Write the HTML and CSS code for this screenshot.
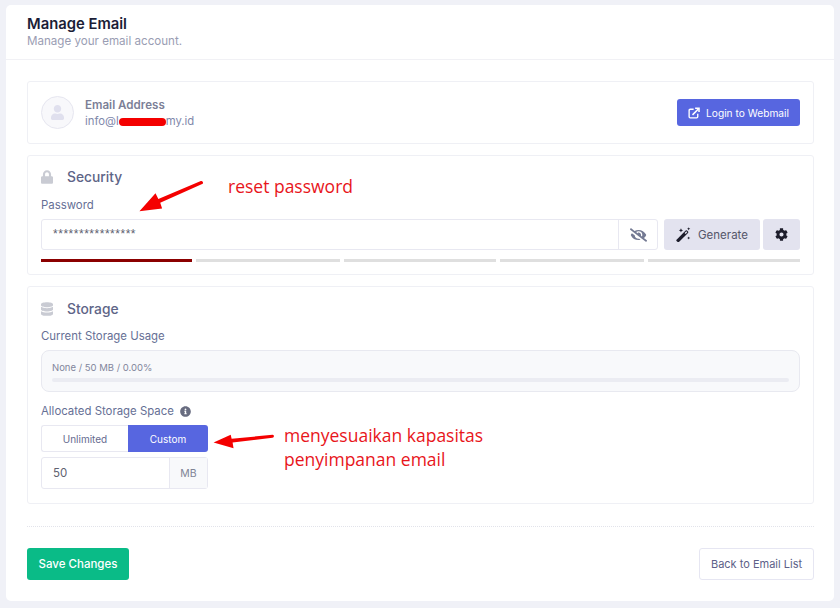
FILE: index.html
```html
<!DOCTYPE html>
<html lang="id">
<head>
    <meta charset="UTF-8">
    <meta name="viewport" content="width=device-width, initial-scale=1.0">
    <title>Manage Email</title>
    <link rel="stylesheet" href="styles.css">
</head>
<body>
    <div class="card">
        <div class="card-header">
            <h1>Manage Email</h1>
            <p>Manage your email account.</p>
        </div>

        <div class="card-body">
            <div class="panel account">
                <div class="avatar">
                    <svg viewBox="0 0 448 512" class="avatar-icon"><path d="M224 256c70.7 0 128-57.3 128-128S294.7 0 224 0 96 57.3 96 128s57.3 128 128 128zm89.6 32h-16.7c-22.2 10.2-46.9 16-72.9 16s-50.6-5.8-72.9-16h-16.7C60.2 288 0 348.2 0 422.4V464c0 26.5 21.5 48 48 48h352c26.5 0 48-21.5 48-48v-41.6c0-74.2-60.2-134.4-134.4-134.4z"/></svg>
                </div>
                <div class="account-text">
                    <div class="account-label">Email Address</div>
                    <div class="account-mail">info@l<span class="redact"></span>my.id</div>
                </div>
                <a href="#" class="btn btn-primary btn-webmail">
                    <svg viewBox="0 0 16 16" class="btn-icon"><path d="M7.5 3H3a1.5 1.5 0 0 0-1.5 1.5V13A1.5 1.5 0 0 0 3 14.500h8.500A1.500 1.500 0 0 0 13 13V9" fill="none" stroke="currentColor" stroke-width="1.800"/><path d="M6 10.500 13.500 3M9.500 1.500h5.200v5.200" fill="none" stroke="currentColor" stroke-width="2"/></svg>
                    Login to Webmail
                </a>
            </div>

            <div class="panel security">
                <h2 class="panel-title">
                    <svg viewBox="0 0 448 512" class="title-icon"><path d="M400 224h-24v-72C376 68.2 307.8 0 224 0S72 68.2 72 152v72H48c-26.5 0-48 21.5-48 48v192c0 26.5 21.5 48 48 48h352c26.500 0 48-21.500 48-48V272c0-26.500-21.500-48-48-48zm-104 0H152v-72c0-39.700 32.300-72 72-72s72 32.300 72 72v72z"/></svg>
                    Security
                </h2>
                <label class="field-label">Password</label>
                <div class="password-row">
                    <div class="input-group password-group">
                        <div class="input-value password-value">****************</div>
                        <div class="addon addon-eye">
                            <svg viewBox="0 0 640 512" class="eye-icon"><path d="M320 400c-75.850 0-137.250-58.710-142.900-133.110L72.200 185.820c-13.790 17.300-26.480 35.590-36.720 55.590a32.350 32.350 0 0 0 0 29.190C89.710 376.410 197.070 448 320 448c26.910 0 52.870-4 77.890-10.460L346 397.390a144.130 144.130 0 0 1-26 2.610zm313.820 58.100l-110.550-85.440a331.250 331.250 0 0 0 81.250-102.070 32.350 32.350 0 0 0 0-29.190C550.290 135.590 442.930 64 320 64a308.150 308.150 0 0 0-147.320 37.700L45.460 3.370A16 16 0 0 0 23 6.180L3.370 31.450A16 16 0 0 0 6.180 53.900l588.360 454.730a16 16 0 0 0 22.460-2.810l19.640-25.270a16 16 0 0 0-2.820-22.450zm-183.720-142l-39.300-30.380A94.750 94.750 0 0 0 416 256a94.760 94.760 0 0 0-121.310-92.210A47.650 47.650 0 0 1 304 192a46.640 46.640 0 0 1-1.540 10l-73.610-56.890A142.310 142.310 0 0 1 320 112a143.920 143.920 0 0 1 144 144c0 21.630-5.290 41.790-13.900 60.110z"/></svg>
                        </div>
                    </div>
                    <a href="#" class="btn btn-soft btn-generate">
                        <svg viewBox="0 0 16 16" class="wand-icon"><path d="M.6 13.500 10.300 3.800a1 1 0 0 1 1.400 0l1.100 1.100a1 1 0 0 1 0 1.400L3.100 16a1 1 0 0 1-1.400 0L.6 14.900a1 1 0 0 1 0-1.400z"/><path d="M9.200 6.300 10.900 4.600l1.100 1.100-1.700 1.700z" fill="#e3e3ef"/><path d="M5.300 1.200 6 2.800l1.600.7L6 4.200l-.7 1.600-.7-1.600L3 3.500l1.600-.7zM13.500.2l.5 1.200 1.200.5-1.200.5-.5 1.200-.5-1.200-1.200-.5 1.200-.5zM13.500 10l.5 1.200 1.200.5-1.200.5-.5 1.200-.5-1.200-1.200-.5 1.200-.5z"/></svg>
                        Generate
                    </a>
                    <a href="#" class="btn btn-soft btn-gear">
                        <svg viewBox="0 0 512 512" class="gear-icon"><path d="M487.400 315.700l-42.600-24.600c4.300-23.200 4.300-47 0-70.200l42.600-24.600c4.900-2.800 7.100-8.600 5.500-14-11.100-35.600-30-67.800-54.700-94.600-3.800-4.100-10-5.100-14.800-2.300L380.800 110c-17.900-15.400-38.500-27.300-60.800-35.100V25.800c0-5.600-3.900-10.500-9.400-11.700-36.700-8.200-74.300-7.800-109.200 0-5.500 1.200-9.400 6.100-9.400 11.700V75c-22.200 7.900-42.800 19.800-60.800 35.100L88.700 85.500c-4.900-2.800-11-1.900-14.800 2.300-24.700 26.700-43.600 58.900-54.700 94.600-1.700 5.400.6 11.200 5.500 14L67.300 221c-4.300 23.200-4.300 47 0 70.200l-42.600 24.600c-4.900 2.800-7.100 8.600-5.500 14 11.100 35.600 30 67.800 54.700 94.600 3.800 4.100 10 5.100 14.800 2.300l42.600-24.600c17.900 15.400 38.500 27.300 60.800 35.100v49.200c0 5.600 3.900 10.500 9.400 11.700 36.700 8.200 74.300 7.800 109.200 0 5.500-1.200 9.400-6.100 9.400-11.700v-49.200c22.200-7.900 42.800-19.800 60.800-35.100l42.600 24.600c4.900 2.800 11 1.900 14.800-2.300 24.700-26.700 43.600-58.900 54.700-94.600 1.500-5.500-.7-11.300-5.600-14.100zM256 336c-44.100 0-80-35.900-80-80s35.900-80 80-80 80 35.900 80 80-35.900 80-80 80z"/></svg>
                    </a>
                </div>
                <div class="strength">
                    <span class="strength-bar strength-on"></span>
                    <span class="strength-bar"></span>
                    <span class="strength-bar"></span>
                    <span class="strength-bar"></span>
                    <span class="strength-bar"></span>
                </div>
            </div>

            <div class="panel storage">
                <h2 class="panel-title">
                    <svg viewBox="0 0 448 512" class="title-icon"><path d="M448 73.143v45.714C448 159.143 347.667 192 224 192S0 159.143 0 118.857V73.143C0 32.857 100.333 0 224 0s224 32.857 224 73.143zM448 176v102.857C448 319.143 347.667 352 224 352S0 319.143 0 278.857V176c48.125 33.143 136.208 48.572 224 48.572S399.874 209.143 448 176zm0 160v102.857C448 479.143 347.667 512 224 512S0 479.143 0 438.857V336c48.125 33.143 136.208 48.572 224 48.572S399.874 369.143 448 336z"/></svg>
                    Storage
                </h2>
                <label class="field-label">Current Storage Usage</label>
                <div class="usage">
                    <div class="usage-text">None / 50 MB / 0.00%</div>
                    <div class="usage-track"></div>
                </div>
                <label class="field-label field-label-info">
                    Allocated Storage Space
                    <svg viewBox="0 0 512 512" class="info-icon"><path d="M256 8C119.043 8 8 119.083 8 256c0 136.997 111.043 248 248 248s248-111.003 248-248C504 119.083 392.957 8 256 8zm0 110c23.196 0 42 18.804 42 42s-18.804 42-42 42-42-18.804-42-42 18.804-42 42-42zm56 254c0 6.627-5.373 12-12 12h-88c-6.627 0-12-5.373-12-12v-24c0-6.627 5.373-12 12-12h12v-64h-12c-6.627 0-12-5.373-12-12v-24c0-6.627 5.373-12 12-12h64c6.627 0 12 5.373 12 12v100h12c6.627 0 12 5.373 12 12v24z"/></svg>
                </label>
                <div class="toggle">
                    <span class="toggle-item">Unlimited</span>
                    <span class="toggle-item toggle-active">Custom</span>
                </div>
                <div class="input-group size-group">
                    <div class="input-value size-value">50</div>
                    <div class="addon addon-unit">MB</div>
                </div>
            </div>

            <div class="actions">
                <a href="#" class="btn btn-success">Save Changes</a>
                <a href="#" class="btn btn-outline">Back to Email List</a>
            </div>
        </div>
    </div>

    <div class="note note-reset">reset password</div>
    <div class="note note-storage">menyesuaikan kapasitas<br>penyimpanan email</div>
    <svg class="arrow arrow-reset" viewBox="0 0 70 36"><path d="M67 3 22 23 24 29 0 32 17 13 20 19 65 0a2 2 0 0 1 2 3z"/></svg>
    <svg class="arrow arrow-storage" viewBox="0 0 64 20"><path d="M62 6 20 11 21 17 0 11 18 3 19 7 62 3a1.500 1.500 0 0 1 0 3z"/></svg>
</body>
</html>
```

FILE: styles.css
```css
* {
    box-sizing: border-box;
}

body {
    font-family: 'Inter', 'Liberation Sans', sans-serif;
    margin: 0;
    padding: 5px 6px 7px;
    height: 608px;
    overflow: hidden;
    position: relative;
    background: #f0f1f7;
    color: #5e6278;
}

a {
    text-decoration: none;
}

.card {
    background: #fff;
    border-radius: 5px;
    height: 596px;
}

.card-header {
    height: 55px;
    padding: 10px 21px 0;
    border-bottom: 1px solid #f1f1f5;
}

h1 {
    margin: 0;
    font-size: 14.800px;
    line-height: 18px;
    font-weight: 600;
    color: #1b1d36;
}

.card-header p {
    margin: 0;
    font-size: 11.600px;
    line-height: 16px;
    color: #9a9db3;
}

.card-body {
    padding: 21px 20px 0 21px;
}

.panel {
    border: 1px solid #eff0f5;
    border-radius: 3px;
    padding: 0 13px;
    margin-bottom: 11px;
}

/* Email Address */
.account {
    height: 63px;
    display: flex;
    align-items: center;
}

.avatar {
    width: 33px;
    height: 33px;
    border-radius: 50%;
    border: 1px solid #e6e6f0;
    background: #f8f8fb;
    display: flex;
    align-items: center;
    justify-content: center;
}

.avatar-icon {
    width: 13px;
    height: 15px;
    fill: #e0e0ee;
}

.account-text {
    margin-left: 11px;
    padding-top: 2px;
    flex: 1;
}

.account-label {
    font-size: 11.600px;
    line-height: 16px;
    font-weight: 600;
    color: #7c7f97;
}

.account-mail {
    font-size: 11.300px;
    line-height: 17px;
    color: #7f88ab;
}

.redact {
    display: inline-block;
    width: 47px;
    height: 8px;
    border-radius: 4px;
    background: #f40000;
    vertical-align: -1px;
}

.btn {
    display: flex;
    align-items: center;
    justify-content: center;
    border-radius: 3px;
    font-size: 11px;
}

.btn-primary {
    background: #5766e0;
    color: #fff;
}

.btn-webmail {
    width: 123px;
    height: 27px;
    gap: 6px;
    font-size: 10.200px;
    font-weight: 400;
}

.btn-icon {
    width: 12px;
    height: 12px;
}

.panel-title {
    margin: 0;
    display: flex;
    align-items: center;
    font-size: 13.800px;
    line-height: 20px;
    font-weight: 500;
    color: #5e6587;
}

.title-icon {
    width: 12px;
    height: 14px;
    margin-right: 14px;
    fill: #c9cbd3;
}

.field-label {
    display: block;
    font-size: 11.400px;
    line-height: 16px;
    color: #666f95;
}

/* Security */
.security {
    height: 120px;
    padding-top: 11px;
}

.security .field-label {
    margin-top: 10px;
}

.password-row {
    display: flex;
    margin-top: 6px;
}

.input-group {
    display: flex;
    height: 31px;
    border: 1px solid #e8e8f1;
    border-radius: 3px;
    background: #fff;
}

.password-group {
    flex: 1;
}

.input-value {
    flex: 1;
    display: flex;
    align-items: center;
}

.password-value {
    padding: 0 0 2px 11px;
    font-family: 'Liberation Sans', sans-serif;
    font-size: 12px;
    letter-spacing: 0.520px;
    color: #5c6070;
}

.addon {
    display: flex;
    align-items: center;
    justify-content: center;
    border-left: 1px solid #e8e8f1;
}

.addon-eye {
    width: 39px;
}

.eye-icon {
    width: 17px;
    height: 14px;
    fill: #747a93;
}

.btn-soft {
    height: 31px;
    background: #e3e3ef;
    color: #55566a;
    fill: #1d1d2b;
}

.btn-generate {
    width: 96px;
    margin-left: 6px;
    gap: 7px;
    font-size: 11.500px;
}

.wand-icon {
    width: 15px;
    height: 15px;
}

.btn-gear {
    width: 37px;
    margin-left: 3px;
}

.gear-icon {
    width: 13px;
    height: 13px;
}

.strength {
    display: grid;
    grid-template-columns: 151px 144px 152px 144px 1fr;
    gap: 4px;
    margin-top: 9px;
}

.strength-bar {
    height: 3px;
    background: #dfdfdf;
}

.strength-on {
    background: #8b0000;
}

/* Storage */
.storage {
    height: 218px;
    padding-top: 12px;
}

.storage .field-label {
    margin-top: 9px;
}

.usage {
    height: 42px;
    margin-top: 6px;
    padding: 10px 10px 0;
    background: #f8f9fb;
    border: 1px solid #e8e9f0;
    border-radius: 8px;
}

.usage-text {
    font-size: 9.500px;
    line-height: 14px;
    color: #82869c;
}

.usage-track {
    height: 4px;
    margin-top: 3px;
    background: #ebecf2;
    border-radius: 2px;
}

.storage .field-label-info {
    display: flex;
    align-items: center;
    gap: 6px;
    margin-top: 11px;
}

.info-icon {
    width: 11px;
    height: 11px;
    fill: #686c80;
}

.toggle {
    display: flex;
    width: 167px;
    height: 27px;
    margin-top: 6px;
    font-size: 10px;
    font-weight: 400;
}

.toggle-item {
    display: flex;
    align-items: center;
    justify-content: center;
    width: 87px;
    border: 1px solid #e8e8f1;
    border-right: 0;
    border-radius: 3px 0 0 3px;
    color: #666b8f;
}

.toggle-active {
    width: 80px;
    border: 0;
    border-radius: 0 3px 3px 0;
    background: #5766e0;
    color: #fff;
}

.size-group {
    width: 167px;
    height: 32px;
    margin-top: 5px;
}

.size-value {
    padding-left: 11px;
    font-size: 11.500px;
    color: #5f6270;
}

.addon-unit {
    width: 38px;
    background: #f8f9fb;
    font-size: 10.500px;
    color: #7f8496;
}

/* Buttons unten */
.actions {
    display: flex;
    justify-content: space-between;
    margin-top: 22px;
    padding-top: 21px;
    border-top: 1px dotted #e2e3ea;
}

.btn-success {
    width: 102px;
    height: 32px;
    background: #0abb87;
    color: #fff;
    font-size: 11.500px;
    font-weight: 500;
}

.btn-outline {
    width: 115px;
    height: 32px;
    border: 1px solid #e6e6f2;
    color: #5d5f88;
}

/* Anmerkungen */
.note {
    position: absolute;
    font-family: 'Open Sans', sans-serif;
    font-size: 17.500px;
    line-height: 24px;
    color: #e8151b;
}

.note-reset {
    left: 228px;
    top: 174px;
}

.note-storage {
    left: 284px;
    top: 423px;
}

.arrow {
    position: absolute;
    fill: #f40000;
}

.arrow-reset {
    left: 139px;
    top: 181px;
    width: 67px;
    height: 34px;
}

.arrow-storage {
    left: 213px;
    top: 432px;
    width: 62px;
    height: 19px;
}
```
